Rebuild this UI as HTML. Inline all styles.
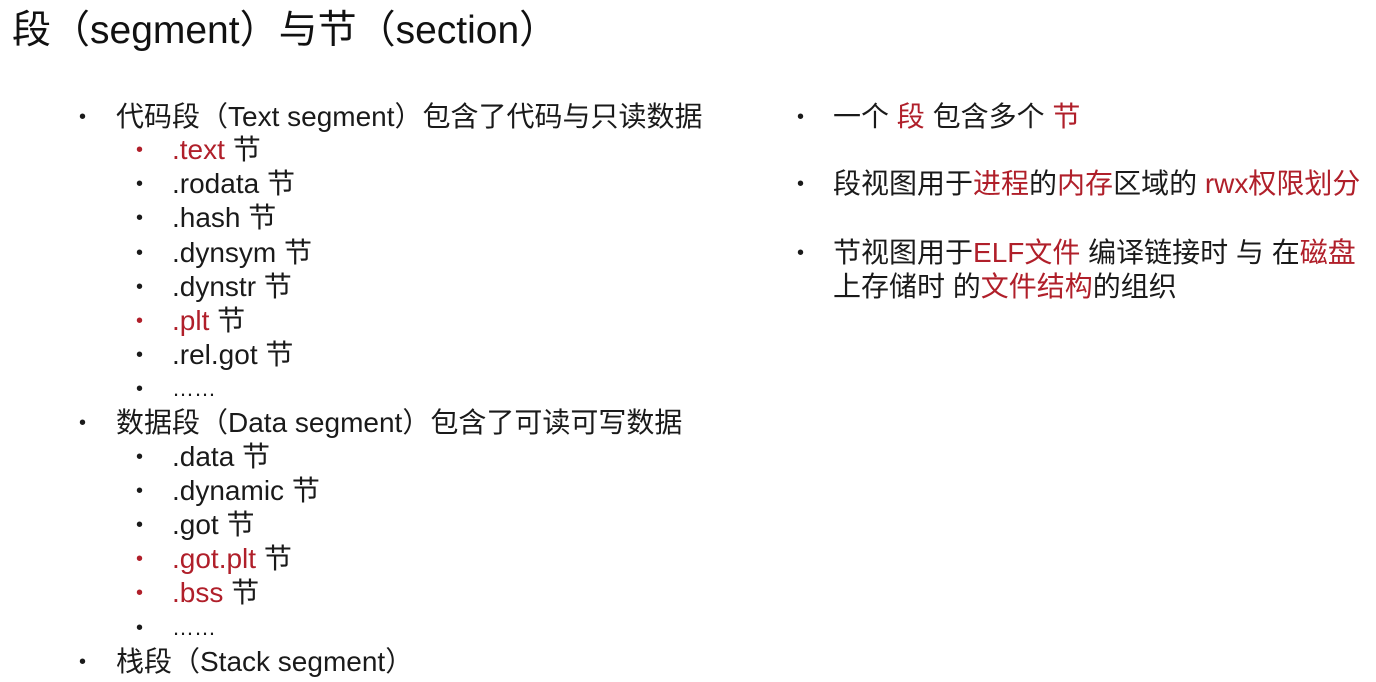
<!DOCTYPE html>
<html><head><meta charset="utf-8"><style>
html,body{margin:0;padding:0;background:#fff;width:1376px;height:682px;overflow:hidden}
body{font-family:"Liberation Sans","Noto Sans CJK SC",sans-serif;color:#1a1a1a;position:relative}
.l{position:absolute;height:34px;line-height:34px;font-size:28px;white-space:nowrap;letter-spacing:0px}
.b{position:absolute;font-size:20px;line-height:34px;height:34px}
.r{color:#b01f2a}
h1{position:absolute;left:12px;top:8px;margin:0;font-weight:normal;font-size:39px;line-height:46px;color:#111;white-space:nowrap}
</style></head><body>
<h1>段（segment）与节（section）</h1>

<div class="b" style="left:79px;top:100px">•</div><div class="l" style="left:116px;top:100px">代码段（Text segment）包含了代码与只读数据</div>
<div class="b r" style="left:136px;top:133px">•</div><div class="l" style="left:172px;top:133px"><span class="r">.text</span> 节</div>
<div class="b" style="left:136px;top:167px">•</div><div class="l" style="left:172px;top:167px">.rodata 节</div>
<div class="b" style="left:136px;top:201px">•</div><div class="l" style="left:172px;top:201px">.hash 节</div>
<div class="b" style="left:136px;top:236px">•</div><div class="l" style="left:172px;top:236px">.dynsym 节</div>
<div class="b" style="left:136px;top:270px">•</div><div class="l" style="left:172px;top:270px">.dynstr 节</div>
<div class="b r" style="left:136px;top:304px">•</div><div class="l" style="left:172px;top:304px"><span class="r">.plt</span> 节</div>
<div class="b" style="left:136px;top:338px">•</div><div class="l" style="left:172px;top:338px">.rel.got 节</div>
<div class="b" style="left:136px;top:372px">•</div><div class="l" style="left:172px;top:372px;font-size:22px">……</div>
<div class="b" style="left:79px;top:406px">•</div><div class="l" style="left:116px;top:406px">数据段（Data segment）包含了可读可写数据</div>
<div class="b" style="left:136px;top:440px">•</div><div class="l" style="left:172px;top:440px">.data 节</div>
<div class="b" style="left:136px;top:474px">•</div><div class="l" style="left:172px;top:474px">.dynamic 节</div>
<div class="b" style="left:136px;top:508px">•</div><div class="l" style="left:172px;top:508px">.got 节</div>
<div class="b r" style="left:136px;top:542px">•</div><div class="l" style="left:172px;top:542px"><span class="r">.got.plt</span> 节</div>
<div class="b r" style="left:136px;top:576px">•</div><div class="l" style="left:172px;top:576px"><span class="r">.bss</span> 节</div>
<div class="b" style="left:136px;top:611px">•</div><div class="l" style="left:172px;top:611px;font-size:22px">……</div>
<div class="b" style="left:79px;top:645px">•</div><div class="l" style="left:116px;top:645px">栈段（Stack segment）</div>

<div class="b" style="left:797px;top:100px">•</div><div class="l" style="left:833px;top:100px">一个 <span class="r">段</span> 包含多个 <span class="r">节</span></div>
<div class="b" style="left:797px;top:167px">•</div><div class="l" style="left:833px;top:167px">段视图用于<span class="r">进程</span>的<span class="r">内存</span>区域的 <span class="r">rwx权限划分</span></div>
<div class="b" style="left:797px;top:236px">•</div><div class="l" style="left:833px;top:236px">节视图用于<span class="r">ELF文件</span> 编译链接时 与 在<span class="r">磁盘</span></div>
<div class="l" style="left:833px;top:270px">上存储时 的<span class="r">文件结构</span>的组织</div>
</body></html>
